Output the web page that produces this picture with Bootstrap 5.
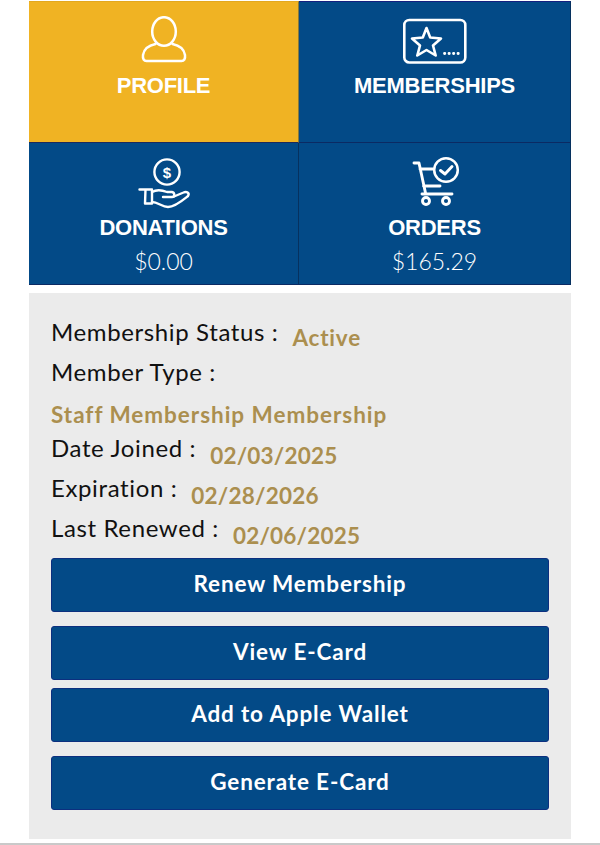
<!DOCTYPE html>
<html lang="en">
<head>
<meta charset="utf-8">
<title>Account</title>
<link href="https://cdn.jsdelivr.net/npm/bootstrap@5.3.0/dist/css/bootstrap.min.css" rel="stylesheet">
<style>
html,body{height:845px;overflow:hidden;background:#fff}
body{font-family:Lato,"Open Sans",sans-serif;color:#111}
.page-wrap{padding:1px 29px 0 29px;height:843px}
.tile-grid{display:grid;grid-template-columns:270px 272px;grid-template-rows:142px 142px}
.tile{background:#034a87;color:#fff;border-right:1px solid #06315f;border-bottom:1px solid #0b2a63;text-decoration:none;display:flex;flex-direction:column;align-items:center;padding-top:14px}
.tile:hover{color:#fff}
.tile-top{border-top:1px solid #14207f}
.tile-gold{background:#f0b323;border-top-color:#e3a81f;border-right-color:#8a7a3a;border-bottom-color:#1c2a5c}
.tile-icon{display:block;height:48px;width:66px;margin-bottom:8px}
.tile-row2{padding-top:13px}
.tile-row2 .tile-icon{height:56px;margin-bottom:2px}
.tile-name{font-family:"Liberation Sans",Arial,sans-serif;font-weight:700;font-size:22px;line-height:28px;letter-spacing:-.25px}
.tile-amt{font-family:Lato,sans-serif;font-weight:300;font-size:23px;line-height:30px;margin-top:4px}
.info-panel{background:#ebebeb;margin-top:8px;height:546px;padding:24px 22px 0 22px}
.info-line{font-size:24px;line-height:30px;height:40px;display:flex;align-items:flex-start;white-space:nowrap;letter-spacing:.62px;font-weight:400}
.info-val{color:#ab8f4f;font-weight:700;font-size:22.5px;margin-left:14px;position:relative;top:6px;letter-spacing:.8px}
.info-date{top:8px;letter-spacing:.2px}
.info-type{color:#ab8f4f;font-weight:700;font-size:22.5px;line-height:30px;height:33px;letter-spacing:.97px;padding-top:4px;margin-top:-1px;white-space:nowrap;box-sizing:content-box}
.action-btn{display:flex;align-items:center;justify-content:center;width:100%;height:54px;padding:0 0 3px;background:#034a87;border:1px solid #0c2f7f;border-radius:3px;color:#fff;font-weight:700;font-size:22.5px;letter-spacing:.85px}
.action-btn:hover{background:#034a87;color:#fff}
.btn-stack{margin-top:5px}
.gap-a{margin-top:14px}.gap-b{margin-top:8px}
.foot-rule{height:2px;background:#c9c9c9}
</style>
</head>
<body>
<div class="page-wrap">
  <div class="tile-grid">
    <a href="#" class="tile tile-top tile-gold">
      <svg class="tile-icon" viewBox="0 0 66 48" fill="none" stroke="#fff" stroke-width="2.5" stroke-linejoin="round" stroke-linecap="round">
        <ellipse cx="33" cy="15.500" rx="11.800" ry="14.300"/>
        <path d="M24.500 28 C17 29.500 12.800 34 12 39 C11.500 43 13 45 15.500 45 H50.500 C53 45 54.500 43 54 39 C53.200 34 49 29.500 41.500 28"/>
      </svg>
      <span class="tile-name">PROFILE</span>
    </a>
    <a href="#" class="tile tile-top">
      <svg class="tile-icon" viewBox="0 0 66 48" fill="none" stroke="#fff" stroke-width="2.600" stroke-linejoin="round" stroke-linecap="round">
        <rect x="2.300" y="4" width="61" height="42.500" rx="5"/>
        <path d="M24.500 12 L28.200 21.500 L39 22.500 L31 29.500 L33.700 39.500 L24.500 34 L15.300 39.500 L18 29.500 L10 22.500 L20.800 21.500 Z"/>
        <path d="M42.500 37.500h.3M47 37.500h.3M51.500 37.500h.3M56 37.500h.3" stroke-width="2.800"/>
      </svg>
      <span class="tile-name">MEMBERSHIPS</span>
    </a>
    <a href="#" class="tile tile-row2">
      <svg class="tile-icon" viewBox="0 0 66 56" fill="none" stroke="#fff" stroke-width="2.400" stroke-linejoin="round" stroke-linecap="round">
        <circle cx="36" cy="16" r="12.600"/>
        <text x="36" y="21.500" text-anchor="middle" fill="#fff" stroke="none" font-family="Liberation Sans, sans-serif" font-weight="700" font-size="15">$</text>
        <path d="M8.500 33.500 H21 V47.500 H14 L14.500 33.500"/>
        <path d="M21 36 C26 33 31 34 36 36 H41 C44 36.500 44 41 41 41 H32"/>
        <path d="M21 46 C27 46 31 51 37 51 C44 51 52 44 57 40 C59 37 55.500 35 52.500 36.500 L43 40.500"/>
      </svg>
      <span class="tile-name">DONATIONS</span>
      <span class="tile-amt">$0.00</span>
    </a>
    <a href="#" class="tile tile-row2">
      <svg class="tile-icon" viewBox="0 0 66 56" fill="none" stroke="#fff" stroke-width="2.900" stroke-linejoin="round" stroke-linecap="round">
        <path d="M12 7 H17 L23.500 37 M18 13 H31 M21.500 30 H38 M20 38 H50"/>
        <circle cx="44" cy="14" r="11.800" stroke-width="2.500"/>
        <path d="M38.500 14.500 L43 18 L50 10.500"/>
        <circle cx="24" cy="45" r="3.500"/>
        <circle cx="44" cy="45" r="3.500"/>
      </svg>
      <span class="tile-name">ORDERS</span>
      <span class="tile-amt">$165.29</span>
    </a>
  </div>
  <div class="info-panel">
    <div class="info-line">Membership Status :<span class="info-val">Active</span></div>
    <div class="info-line">Member Type :</div>
    <div class="info-type">Staff Membership Membership</div>
    <div class="info-line">Date Joined :<span class="info-val info-date">02/03/2025</span></div>
    <div class="info-line">Expiration :<span class="info-val info-date">02/28/2026</span></div>
    <div class="info-line">Last Renewed :<span class="info-val info-date">02/06/2025</span></div>
    <div class="btn-stack">
      <button type="button" class="btn action-btn">Renew Membership</button>
      <button type="button" class="btn action-btn gap-a">View E-Card</button>
      <button type="button" class="btn action-btn gap-b">Add to Apple Wallet</button>
      <button type="button" class="btn action-btn gap-a">Generate E-Card</button>
    </div>
  </div>
</div>
<div class="foot-rule"></div>
<script src="https://cdn.jsdelivr.net/npm/bootstrap@5.3.0/dist/js/bootstrap.bundle.min.js"></script>
</body>
</html>
